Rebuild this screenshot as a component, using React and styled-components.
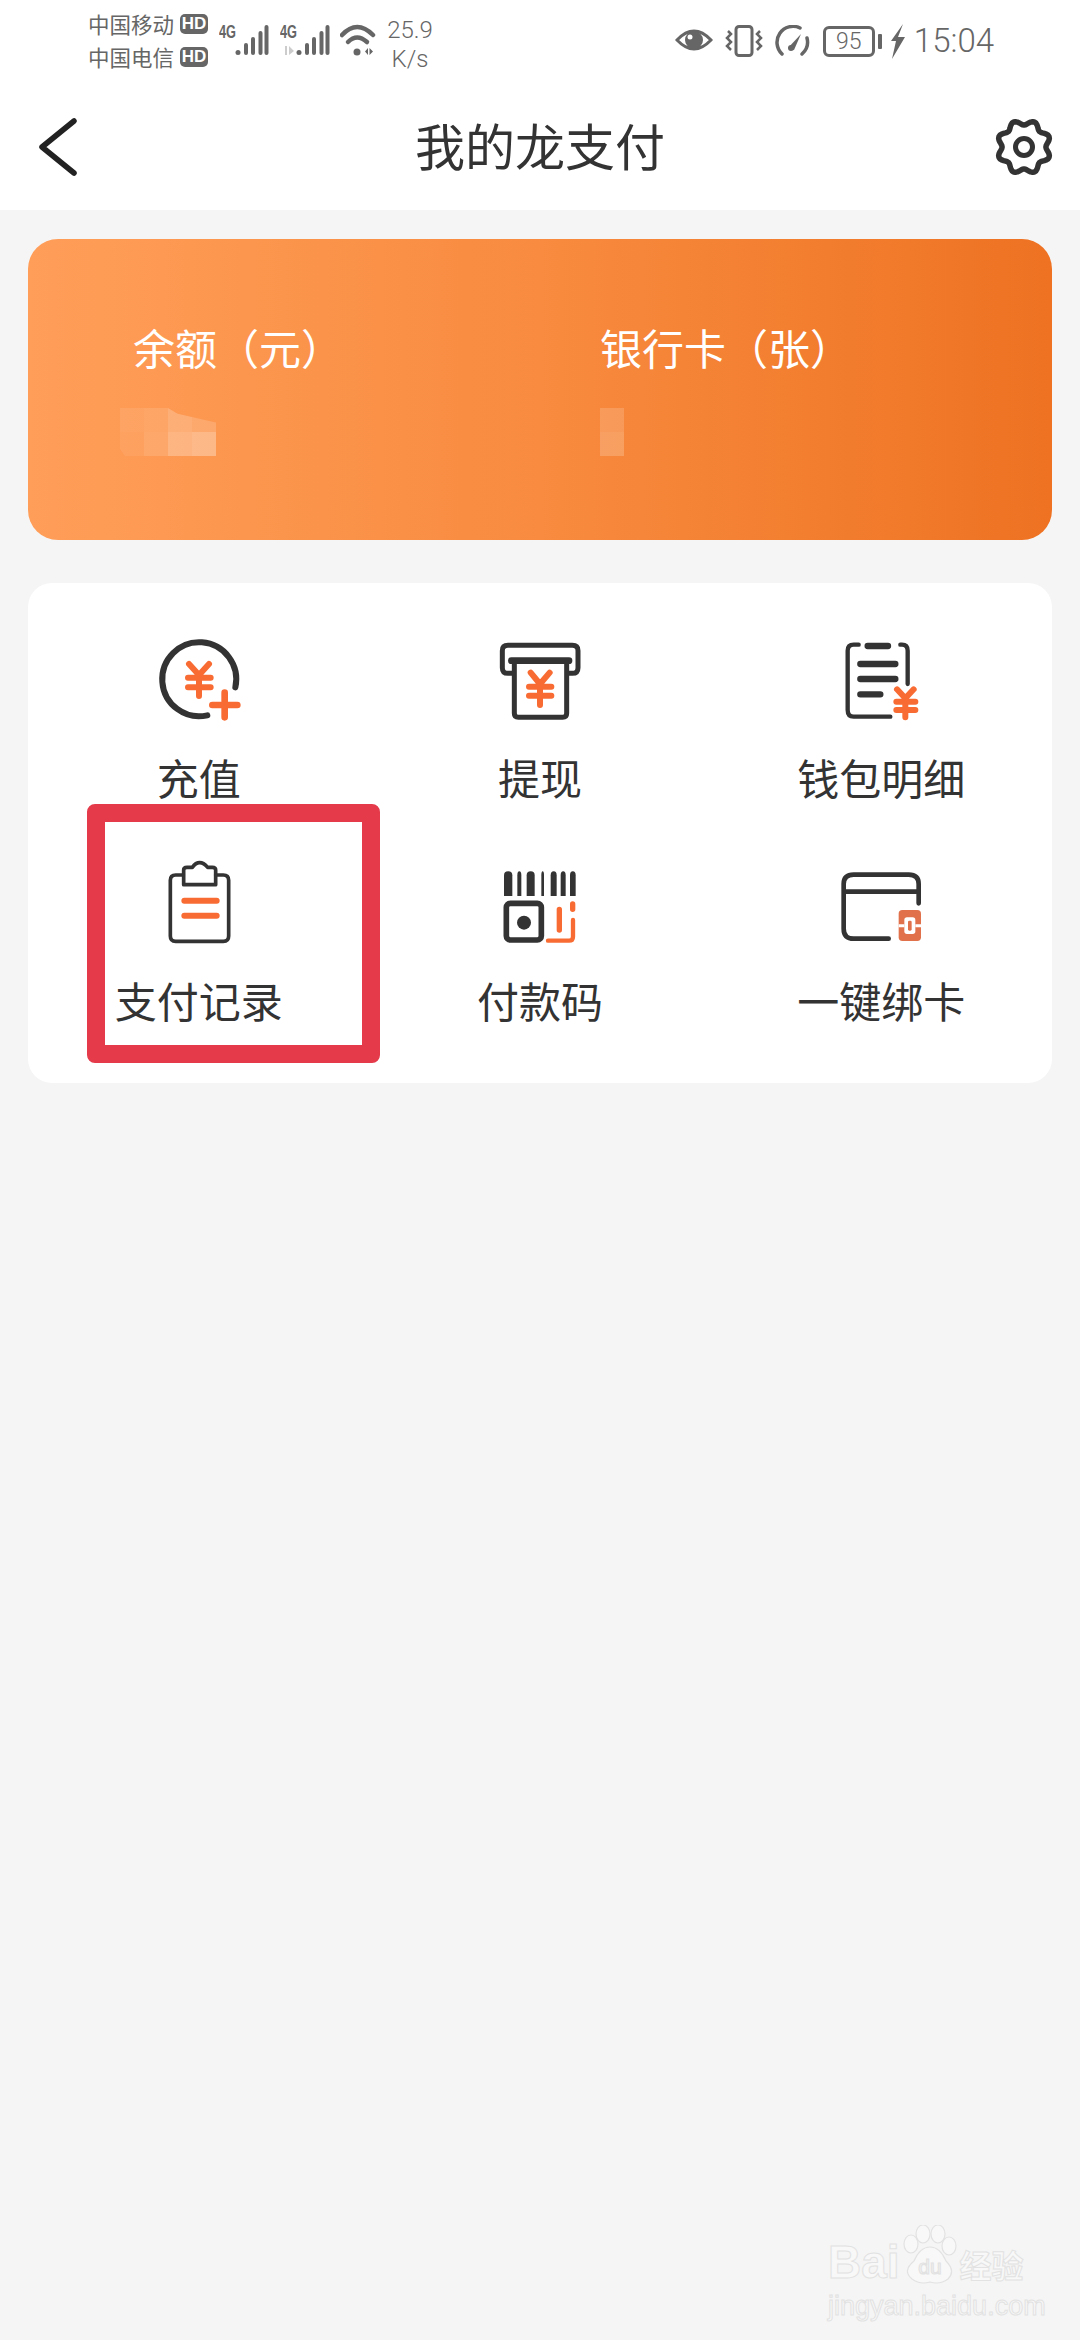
import React from "react";
import styled, { createGlobalStyle } from "styled-components";

const DARK = "#333333";
const ORANGE = "#f86c34";
const GREY = "#666666";
const CJK = `"Noto Sans CJK SC", "Noto Sans", sans-serif`;

const GlobalStyle = createGlobalStyle`
  html, body {
    margin: 0;
    padding: 0;
    background: #f5f5f5;
  }
  * {
    box-sizing: border-box;
  }
`;

const Page = styled.div`
  position: relative;
  width: 1080px;
  height: 2340px;
  overflow: hidden;
  background: #f5f5f5;
  font-family: ${CJK};
`;

const Header = styled.header`
  background: #ffffff;
  height: 210px;
`;

const StatusBar = styled.div`
  display: flex;
  align-items: flex-start;
  justify-content: space-between;
  height: 84px;
  padding: 10px 86px 0 88px;
  color: ${GREY};
`;

const StatusGroup = styled.div`
  display: flex;
  align-items: flex-start;
`;

const Carriers = styled.div`
  display: flex;
  flex-direction: column;
  gap: 5px;
  margin-right: 11px;
`;

const Carrier = styled.div`
  display: flex;
  align-items: center;
  gap: 6px;
  height: 28px;
  font-size: 21.5px;
  line-height: 28px;
`;

const HdBadge = styled.span`
  width: 28px;
  height: 20px;
  border-radius: 5px;
  background: ${GREY};
  color: #ffffff;
  font-family: "Liberation Sans", sans-serif;
  font-size: 17px;
  font-weight: 700;
  line-height: 20px;
  text-align: center;
`;

const Speed = styled.div`
  width: 46px;
  margin: 6px 0 0 7px;
  font-family: Roboto, sans-serif;
  font-size: 24px;
  font-weight: 300;
  line-height: 29px;
  text-align: center;
`;

const StatusIcon = styled.svg`
  display: block;
  flex: none;
  margin-top: ${(p) => p.$top || 0}px;
  margin-left: ${(p) => p.$left || 0}px;
`;

const Battery = styled.div`
  position: relative;
  width: 52px;
  height: 31px;
  margin: 16px 0 0 13px;
  border: 3px solid ${GREY};
  border-radius: 6px;
  font-family: Roboto, sans-serif;
  font-size: 23px;
  font-weight: 300;
  line-height: 25px;
  text-align: center;
`;

const BatteryTip = styled.div`
  width: 4px;
  height: 15px;
  margin: 24px 0 0 3px;
  border-radius: 1px;
  background: ${GREY};
`;

const Clock = styled.div`
  margin: 12px 0 0 9px;
  font-family: Roboto, sans-serif;
  font-size: 33px;
  font-weight: 300;
  line-height: 38px;
`;

const NavBar = styled.nav`
  display: grid;
  grid-template-columns: 1fr auto 1fr;
  align-items: center;
  height: 126px;
  padding: 0 26px;
`;

const NavSlot = styled.div`
  display: flex;
  justify-content: ${(p) => (p.$end ? "flex-end" : "flex-start")};
  padding-left: ${(p) => (p.$end ? 0 : 13)}px;
`;

const Title = styled.h1`
  margin: 0 0 6px;
  color: ${DARK};
  font-size: 50px;
  font-weight: 400;
  line-height: 60px;
`;

const BalanceCard = styled.section`
  display: grid;
  grid-template-columns: 467px 1fr;
  height: 301px;
  margin: 29px 28px 0;
  padding: 83px 0 0 105px;
  border-radius: 30px;
  background: linear-gradient(90deg, #ff9e59 0%, #f88b3f 50%, #ee7222 100%);
`;

const BalanceLabel = styled.div`
  color: #ffffff;
  font-size: 42px;
  line-height: 50px;
`;

const Mosaic = styled.div`
  display: grid;
  grid-template-columns: repeat(${(p) => p.$cols}, 24px);
  grid-auto-rows: 24px;
  align-content: end;
  width: ${(p) => p.$cols * 24}px;
  height: 48px;
  margin: 36px 0 0 ${(p) => p.$shift || 0}px;
  clip-path: ${(p) =>
    p.$notched ? "polygon(0 0, 50% 0, 60% 12%, 100% 30%, 100% 100%, 5% 100%, 0 85%)" : "none"};
`;

const MosaicCell = styled.i`
  background: rgba(255, 255, 255, ${(p) => p.$alpha});
`;

const MenuCard = styled.section`
  display: grid;
  grid-template-columns: repeat(3, 1fr);
  align-content: start;
  row-gap: 58px;
  height: 500px;
  margin: 43px 28px 0;
  padding: 52px 0 55px;
  border-radius: 24px;
  background: #ffffff;
`;

const MenuItem = styled.div`
  position: relative;
  display: flex;
  flex-direction: column;
  align-items: center;
  gap: ${(p) => p.$gap}px;
`;

const MenuIcon = styled.svg`
  display: block;
  width: 90px;
  height: 90px;
  fill: none;
  stroke-linecap: round;
  stroke-linejoin: round;
`;

const MenuLabel = styled.div`
  color: ${DARK};
  font-size: 42px;
  line-height: 50px;
  white-space: nowrap;
`;

const Highlight = styled.div`
  position: absolute;
  top: -56px;
  left: 59px;
  width: 293px;
  height: 259px;
  border: 18px solid #e43a4a;
  border-radius: 8px;
`;

const Watermark = styled.div`
  position: absolute;
  left: 828px;
  top: 2225px;
  width: 200px;
  color: #f8f8f8;
`;

const WatermarkTop = styled.div`
  display: flex;
  align-items: flex-end;
  height: 60px;
`;

const WatermarkBrand = styled.span`
  font-family: "Liberation Sans", sans-serif;
  font-size: 46px;
  font-weight: 700;
  line-height: 46px;
  -webkit-text-stroke: 1px #e2e2e2;
`;

const WatermarkCn = styled.span`
  font-size: 32px;
  font-weight: 700;
  line-height: 42px;
  -webkit-text-stroke: 1px #e2e2e2;
`;

const WatermarkUrl = styled.div`
  margin-top: 6px;
  font-family: "Liberation Sans", sans-serif;
  font-size: 27px;
  line-height: 30px;
  white-space: nowrap;
  -webkit-text-stroke: 1px #e2e2e2;
`;

const Yen = ({ d }) => <path d={d} stroke={ORANGE} strokeWidth="18" />;

const RechargeIcon = () => (
  <MenuIcon viewBox="160 75 270 270">
    <path d="M404 232A111 111 0 1 0 320 316" stroke={DARK} strokeWidth="18" />
    <Yen d="M265 162L295 195L325 162M262 203H330M262 232H330M295 195V258" />
    <path d="M372 248V322M335 285H410" stroke={ORANGE} strokeWidth="20" />
  </MenuIcon>
);

const WithdrawIcon = () => (
  <MenuIcon viewBox="133 75 270 270">
    <path
      d="M185 190H172Q155 190 155 173V122Q155 106 172 106H365Q382 106 382 122V173Q382 190 365 190H352"
      stroke={DARK}
      strokeWidth="15"
    />
    <path d="M191 152V310Q191 322 203 322H336Q348 322 348 310V152" stroke={DARK} strokeWidth="15" />
    <path d="M182 152H355" stroke={DARK} strokeWidth="20" />
    <Yen d="M240 188L268 222L297 188M235 230H302M235 257H302M268 222V285" />
  </MenuIcon>
);

const WalletIcon = () => (
  <MenuIcon viewBox="137 75 270 270">
    <path
      d="M205 104H190Q172 104 172 122V300Q172 320 190 320H300M330 104H335Q352 104 352 122V222"
      stroke={DARK}
      strokeWidth="13"
    />
    <path d="M232 108H293M210 162H315M210 207H315M210 253H270" stroke={DARK} strokeWidth="19" />
    <Yen d="M320 238L345 265L370 238M318 275H375M318 300H375M345 265V322" />
  </MenuIcon>
);

const RecordIcon = () => (
  <MenuIcon viewBox="247 210 270 270">
    <path
      d="M335 255H312Q296 255 296 271V438Q296 454 312 454H455Q471 454 471 438V271Q471 255 455 255H432"
      stroke={DARK}
      strokeWidth="11"
    />
    <path
      d="M336 284V240Q336 232 346 232H362Q372 218 384 218Q396 218 408 232H422Q432 232 432 240V284Z"
      stroke={DARK}
      strokeWidth="11"
    />
    <path d="M338 332H435M338 377H435" stroke={ORANGE} strokeWidth="18" />
  </MenuIcon>
);

const barcode = [
  [160, 25],
  [200, 12],
  [228, 24],
  [272, 8],
  [300, 18],
  [330, 15],
  [358, 17],
];

const PayCodeIcon = () => (
  <MenuIcon viewBox="133 60 270 270">
    {barcode.map(([x, w]) => (
      <path
        key={x}
        d={`M${x} 168V106Q${x} 94 ${x + w / 2} 94Q${x + w} 94 ${x + w} 106V168Z`}
        fill={DARK}
      />
    ))}
    <rect x="167" y="190" width="105" height="110" rx="12" stroke={DARK} strokeWidth="17" />
    <circle cx="220" cy="248" r="21" fill={DARK} />
    <path d="M326 208V270M366 192V208" stroke={ORANGE} strokeWidth="16" />
    <path d="M292 302H355Q367 302 367 290V240" stroke={ORANGE} strokeWidth="13" />
  </MenuIcon>
);

const BindCardIcon = () => (
  <MenuIcon viewBox="137 60 270 270">
    <path
      d="M295 296H190Q160 296 160 266V132Q160 104 190 104H355Q385 104 385 132V190M165 155H382"
      stroke={DARK}
      strokeWidth="14"
    />
    <rect x="325" y="210" width="67" height="93" rx="11" fill="#e0714b" />
    <rect x="342" y="232" width="33" height="50" rx="8" fill="#ffffff" />
    <rect x="353" y="242" width="11" height="30" rx="4" fill="#e0714b" />
    <path d="M325 257H342M375 257H392" stroke="#ffffff" strokeWidth="9" strokeLinecap="butt" />
  </MenuIcon>
);

const items = [
  { label: "充值", Icon: RechargeIcon, gap: 27 },
  { label: "提现", Icon: WithdrawIcon, gap: 27 },
  { label: "钱包明细", Icon: WalletIcon, gap: 27 },
  { label: "支付记录", Icon: RecordIcon, gap: 25, marked: true },
  { label: "付款码", Icon: PayCodeIcon, gap: 25 },
  { label: "一键绑卡", Icon: BindCardIcon, gap: 25 },
];

const signalBars = [
  [25, 12],
  [32, 18],
  [39.5, 24],
  [45.5, 30],
];

const SignalIcon = ({ left, lte }) => (
  <StatusIcon width="52" height="34" viewBox="0 0 52 34" $top={12} $left={left}>
    <text
      x="0"
      y="16"
      fill={GREY}
      fontFamily="Liberation Sans"
      fontSize="18"
      fontWeight="700"
      textLength="17"
      lengthAdjust="spacingAndGlyphs"
    >
      4G
    </text>
    {lte && <path d="M5 24V33H7V24ZM9 24V33L14 29Z" fill="#cccccc" />}
    <g fill={GREY}>
      <circle cx="19" cy="30.5" r="2.5" />
      {signalBars.map(([x, h]) => (
        <rect key={x} x={x} y={33 - h} width="4" height={h} rx="2" />
      ))}
    </g>
  </StatusIcon>
);

const WifiIcon = () => (
  <StatusIcon width="40" height="34" viewBox="0 0 40 34" $top={12} $left={8} fill="none">
    <g stroke={GREY} strokeWidth="4.5" strokeLinecap="round">
      <path d="M2 13Q17 -3 33 13" />
      <path d="M8 20Q17 11 27 20" />
    </g>
    <circle cx="17" cy="30" r="3.5" fill={GREY} />
    <path d="M25 29.5L28 26V33ZM29.5 26V33L33 29.5Z" fill={GREY} />
  </StatusIcon>
);

const EyeIcon = () => (
  <StatusIcon width="38" height="26" viewBox="0 0 38 26" $top={17} fill="none">
    <path d="M2 13Q19 -5 36 13Q19 31 2 13Z" stroke={GREY} strokeWidth="3" />
    <circle cx="19" cy="13" r="9" fill={GREY} />
    <circle cx="15" cy="10" r="2.5" fill="#ffffff" />
  </StatusIcon>
);

const VibrateIcon = () => (
  <StatusIcon width="38" height="32" viewBox="0 0 38 32" $top={15} $left={12} fill="none">
    <rect x="11" y="1.5" width="16" height="29" rx="3" stroke={GREY} strokeWidth="3" />
    <path
      d="M3 6L6 9L2 13L6 17L2 21L6 25M35 6L32 9L36 13L32 17L36 21L32 25"
      stroke={GREY}
      strokeWidth="2.5"
    />
  </StatusIcon>
);

const GaugeIcon = () => (
  <StatusIcon width="36" height="32" viewBox="0 0 36 32" $top={15} $left={11} fill="none">
    <path d="M8 29A16 16 0 0 1 26 3" stroke={GREY} strokeWidth="3.5" strokeLinecap="round" />
    <path d="M33 13A16 16 0 0 1 28 29" stroke={GREY} strokeWidth="3.5" strokeLinecap="round" />
    <path d="M14 23L27 9L20 25Z" fill={GREY} />
    <circle cx="17" cy="23" r="3" fill={GREY} />
  </StatusIcon>
);

const BoltIcon = () => (
  <StatusIcon width="15" height="35" viewBox="0 0 15 35" $top={14} $left={8}>
    <path d="M13 0L1 17H6L2 35L15 13H8Z" fill={GREY} />
  </StatusIcon>
);

const gearPath = (() => {
  const points = [];
  for (let i = 0; i < 96; i++) {
    const t = (i / 96) * Math.PI * 2;
    const r = 24.5 - 2.6 * Math.cos(8 * t);
    points.push(`${(30 + r * Math.sin(t)).toFixed(2)} ${(30 - r * Math.cos(t)).toFixed(2)}`);
  }
  return `M${points.join("L")}Z`;
})();

const App = () => (
  <Page>
    <GlobalStyle />
    <Header>
      <StatusBar>
        <StatusGroup>
          <Carriers>
            <Carrier>
              中国移动<HdBadge>HD</HdBadge>
            </Carrier>
            <Carrier>
              中国电信<HdBadge>HD</HdBadge>
            </Carrier>
          </Carriers>
          <SignalIcon />
          <SignalIcon left={9} lte />
          <WifiIcon />
          <Speed>
            25.9
            <br />
            K/s
          </Speed>
        </StatusGroup>
        <StatusGroup>
          <EyeIcon />
          <VibrateIcon />
          <GaugeIcon />
          <Battery>95</Battery>
          <BatteryTip />
          <BoltIcon />
          <Clock>15:04</Clock>
        </StatusGroup>
      </StatusBar>
      <NavBar>
        <NavSlot>
          <svg width="38" height="60" viewBox="0 0 38 60" fill="none">
            <path d="M35 4L3 30L35 56" stroke="#222222" strokeWidth="5.5" strokeLinecap="round" strokeLinejoin="round" />
          </svg>
        </NavSlot>
        <Title>我的龙支付</Title>
        <NavSlot $end>
          <svg width="60" height="60" viewBox="0 0 60 60" fill="none">
            <path d={gearPath} stroke={DARK} strokeWidth="5.5" strokeLinejoin="round" />
            <circle cx="30" cy="30" r="8.5" stroke={DARK} strokeWidth="5" />
          </svg>
        </NavSlot>
      </NavBar>
    </Header>

    <BalanceCard>
      <div>
        <BalanceLabel>余额（元）</BalanceLabel>
        <Mosaic $cols={4} $shift={-13} $notched>
          {[0.09, 0.12, 0.22, 0.16, 0.07, 0.14, 0.28, 0.32].map((alpha, i) => (
            <MosaicCell key={i} $alpha={alpha} />
          ))}
        </Mosaic>
      </div>
      <div>
        <BalanceLabel>银行卡（张）</BalanceLabel>
        <Mosaic $cols={1}>
          {[0.16, 0.2].map((alpha, i) => (
            <MosaicCell key={i} $alpha={alpha} />
          ))}
        </Mosaic>
      </div>
    </BalanceCard>

    <MenuCard>
      {items.map(({ label, Icon, gap, marked }) => (
        <MenuItem key={label} $gap={gap}>
          <Icon />
          <MenuLabel>{label}</MenuLabel>
          {marked && <Highlight />}
        </MenuItem>
      ))}
    </MenuCard>

    <Watermark>
      <WatermarkTop>
        <WatermarkBrand>Bai</WatermarkBrand>
        <svg width="60" height="60" viewBox="0 0 60 60" fill="#f8f8f8" stroke="#e2e2e2" strokeWidth="1.2">
          <ellipse cx="11" cy="19" rx="7" ry="9" />
          <ellipse cx="23" cy="9" rx="7" ry="9" />
          <ellipse cx="38" cy="9" rx="7" ry="9" />
          <ellipse cx="49" cy="21" rx="7" ry="9" />
          <path d="M30 22Q40 22 46 36Q56 46 48 54Q40 60 30 57Q20 60 12 54Q2 46 14 36Q20 22 30 22Z" />
          <text x="30" y="49" textAnchor="middle" fontFamily="Liberation Sans" fontSize="21" fill="#f8f8f8">
            du
          </text>
        </svg>
        <WatermarkCn>经验</WatermarkCn>
      </WatermarkTop>
      <WatermarkUrl>jingyan.baidu.com</WatermarkUrl>
    </Watermark>
  </Page>
);

export default App;
